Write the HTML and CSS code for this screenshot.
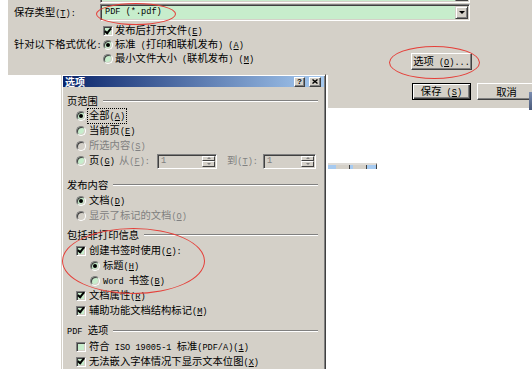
FILE: index.html
```html
<!DOCTYPE html>
<html>
<head>
  <meta charset="utf-8">
  <title>选项</title>
  <link rel="stylesheet" href="styles.css">
</head>
<body>

<div class="save-dlg">
  <div class="line frag">
    <span class="lbl"></span>
    <div class="combo"><span class="combo-val"></span><span class="drop"></span></div>
  </div>
  <div class="line l1">
    <span class="lbl">保存类型<span class="lt">(<u>T</u>):</span></span>
    <div class="combo"><span class="combo-val lt">PDF (*.pdf)</span><span class="drop"></span></div>
  </div>
  <div class="line l2">
    <span class="lbl"></span>
    <div class="ctl"><span class="cb on"></span><span>发布后打开文件<span class="lt">(<u>E</u>)</span></span></div>
  </div>
  <div class="line">
    <span class="lbl">针对以下格式优化<span class="lt">:</span></span>
    <div class="ctl"><span class="rd on"></span><span>标准<span class="lt"> (</span>打印和联机发布<span class="lt">) (<u>A</u>)</span></span></div>
  </div>
  <div class="line l4">
    <span class="lbl"></span>
    <div class="ctl">
      <span class="opt"><span class="rd"></span><span>最小文件大小<span class="lt"> (</span>联机发布<span class="lt">) (<u>M</u>)</span></span></span>
      <button class="btn opt-btn">选项<span class="lt"> (<u>O</u>)...</span></button>
    </div>
  </div>
  <div class="btn-row">
    <button class="btn def">保存<span class="lt"> (<u>S</u>)</span></button>
    <button class="btn">取消</button>
  </div>
</div>

<div class="opt-dlg">
  <div class="title">
    <span class="cap">选项</span>
    <span class="tb">?</span>
    <span class="tb tb-x"><svg width="6" height="5" viewBox="0 0 6 5"><path d="M0.5 0.5L5.5 4.5M5.5 0.5L0.5 4.5" stroke="#000" stroke-width="1.4"/></svg></span>
  </div>
  <div class="body">
    <div class="grp">
      <div class="head"><span>页范围</span></div>
      <div class="row first"><span class="rd on"></span><span class="focus">全部<span class="lt">(<u>A</u>)</span></span></div>
      <div class="row"><span class="rd"></span><span>当前页<span class="lt">(<u>E</u>)</span></span></div>
      <div class="row dis"><span class="rd"></span><span>所选内容<span class="lt">(<u>S</u>)</span></span></div>
      <div class="row pages">
        <span class="rd"></span>
        <span class="pg">页<span class="lt">(<u>G</u>)</span></span>
        <span class="dis from">从<span class="lt">(<u>F</u>):</span></span>
        <span class="spin w1"><span class="val lt">1</span><span class="arrows"><i></i><i></i></span></span>
        <span class="dis to">到<span class="lt">(<u>T</u>):</span></span>
        <span class="spin w2"><span class="val lt">1</span><span class="arrows"><i></i><i></i></span></span>
      </div>
    </div>

    <div class="grp g2">
      <div class="head"><span>发布内容</span></div>
      <div class="row"><span class="rd on"></span><span>文档<span class="lt">(<u>D</u>)</span></span></div>
      <div class="row dis"><span class="rd"></span><span>显示了标记的文档<span class="lt">(<u>O</u>)</span></span></div>
    </div>

    <div class="grp g3">
      <div class="head"><span>包括非打印信息</span></div>
      <div class="row"><span class="cb on"></span><span>创建书签时使用<span class="lt">(<u>C</u>):</span></span></div>
      <div class="row sub"><span class="rd on"></span><span>标题<span class="lt">(<u>H</u>)</span></span></div>
      <div class="row sub"><span class="rd"></span><span><span class="lt">Word </span>书签<span class="lt">(<u>B</u>)</span></span></div>
      <div class="row"><span class="cb on"></span><span>文档属性<span class="lt">(<u>R</u>)</span></span></div>
      <div class="row"><span class="cb on"></span><span>辅助功能文档结构标记<span class="lt">(<u>M</u>)</span></span></div>
    </div>

    <div class="grp g4">
      <div class="head"><span><span class="lt">PDF </span>选项</span></div>
      <div class="row"><span class="cb"></span><span>符合<span class="lt"> ISO 19005-1 </span>标准<span class="lt">(PDF/A)(<u>1</u>)</span></span></div>
      <div class="row"><span class="cb on"></span><span>无法嵌入字体情况下显示文本位图<span class="lt">(<u>X</u>)</span></span></div>
    </div>
  </div>
</div>

<div class="peek"><i></i><i></i></div>
<div class="edge"></div>

<div class="mark m-pdf"></div>
<div class="mark m-opt"></div>
<div class="mark m-bm"></div>

</body>
</html>
```

FILE: styles.css
```css
body {
  margin: 0;
  width: 532px;
  height: 369px;
  overflow: hidden;
  position: relative;
  background: #fff;
  font-family: "Noto Sans CJK SC", sans-serif;
  font-size: 10.3px;
  color: #000;
}

u { text-underline-offset: 1px; }

.lt {
  font-family: "Liberation Mono", monospace;
  font-size: 8.6px;
}

/* save dialog behind */
.save-dlg {
  position: absolute;
  left: 8px;
  top: 0;
  width: 524px;
  height: 108px;
  background: #d4d0c8;
  clip-path: polygon(0 0, 100% 0, 100% 100%, 320px 100%, 320px 75px, 0 75px);
}

.line {
  display: flex;
  align-items: center;
  height: 14px;
  line-height: 14px;
  padding-left: 6px;
  white-space: nowrap;
}
.line .lbl { width: 86px; flex: none; }
.line .ctl {
  width: 369px;
  display: flex;
  align-items: center;
  padding-left: 3px;
}
.frag { height: 17px; margin-top: -14px; }
.l1 { height: 17px; margin-top: 1px; }
.l2 { margin-top: 3px; }
.l4 { height: 18px; align-items: flex-start; }
.l4 .ctl { align-items: flex-start; }
.opt { display: flex; align-items: center; height: 14px; }

.combo {
  width: 370px;
  height: 17px;
  box-sizing: border-box;
  border: 1px solid;
  border-color: #808080 #fff #fff #808080;
  box-shadow: inset 1px 1px #404040, inset -1px -1px #d4d0c8;
  background: #c7edcc;
  padding: 1px;
  display: flex;
  align-items: center;
}
.combo-val { flex: 1; padding-left: 3px; line-height: 13px; }
.drop {
  width: 13px;
  height: 13px;
  box-sizing: border-box;
  background: #d4d0c8;
  border: 1px solid;
  border-color: #d4d0c8 #404040 #404040 #d4d0c8;
  box-shadow: inset 1px 1px #fff, inset -1px -1px #808080;
  display: flex;
  align-items: center;
  justify-content: center;
}
.drop::after {
  content: "";
  border-left: 3px solid transparent;
  border-right: 3px solid transparent;
  border-top: 3px solid #000;
}

.btn {
  font: inherit;
  color: #000;
  height: 17px;
  box-sizing: border-box;
  padding: 0;
  line-height: 13px;
  background: #d4d0c8;
  border: 1px solid;
  border-color: #fff #404040 #404040 #fff;
  box-shadow: inset -1px -1px #808080;
}
.btn.def {
  border-color: #000;
  box-shadow: inset 1px 1px #fff, inset -1px -1px #404040, inset -2px -2px #808080;
}
.opt-btn { width: 61px; margin: 1px 0 0 auto; }
.btn-row {
  display: flex;
  justify-content: flex-end;
  gap: 6px;
  margin: 13px -4px 0 0;
}
.btn-row .btn { width: 59px; }

/* check boxes and radios */
.cb, .rd {
  flex: none;
  width: 10px;
  height: 10px;
  box-sizing: border-box;
  border: 1px solid;
  border-color: #808080 #fff #fff #808080;
  box-shadow: inset 1px 1px #404040, inset -1px -1px #d4d0c8;
  background: #c7edcc;
  margin-right: 3px;
  display: flex;
  align-items: center;
  justify-content: center;
}
.rd { border-radius: 50%; }
.rd.on::after {
  content: "";
  width: 4px;
  height: 4px;
  border-radius: 50%;
  background: #000;
}
.cb.on::after {
  content: "";
  width: 2px;
  height: 5px;
  border: solid #000;
  border-width: 0 2px 2px 0;
  transform: translate(0, -1px) rotate(40deg);
}
.line .cb, .line .rd { margin-right: 2px; }

/* options dialog */
.opt-dlg {
  position: absolute;
  left: 61px;
  top: 74px;
  width: 265px;
  height: 300px;
  box-sizing: border-box;
  background: #d4d0c8;
  border: 1px solid;
  border-color: #d4d0c8 #404040 #404040 #d4d0c8;
  box-shadow: inset 1px 1px #fff, inset -1px -1px #808080;
  padding: 1px;
}
.title {
  height: 11px;
  display: flex;
  align-items: center;
  gap: 4px;
  padding: 0 3px 0 2px;
  background: linear-gradient(90deg, #0a246a, #a6caf0);
}
.cap {
  flex: 1;
  color: #fff;
  font-weight: bold;
  font-size: 10px;
  line-height: 11px;
}
.tb {
  width: 11px;
  height: 10px;
  box-sizing: border-box;
  background: #d4d0c8;
  border: 1px solid;
  border-color: #fff #404040 #404040 #fff;
  box-shadow: inset -1px -1px #808080;
  display: flex;
  align-items: center;
  justify-content: center;
  font: bold 8px/8px "Liberation Sans", sans-serif;
}
.tb-x { width: 12px; }
.tb svg { display: block; }

.body { padding: 7px 6px 0 4px; }
.head {
  display: flex;
  align-items: center;
  height: 16px;
  line-height: 16px;
  white-space: nowrap;
}
.head::after {
  content: "";
  flex: 1;
  border-top: 1px solid #808080;
  border-bottom: 1px solid #fff;
  margin-left: 5px;
}
.grp:first-child .head { height: 13px; line-height: 13px; }
.g2 { margin-top: 8px; }
.g3 { margin-top: 4px; }
.g4 { margin-top: 5px; }

.row {
  display: flex;
  align-items: center;
  height: 15px;
  line-height: 15px;
  padding-left: 9px;
  white-space: nowrap;
}
.row.first { margin-top: 1px; }
.row.sub { padding-left: 23px; }
.dis { color: #808080; }
.dis .rd { background: #d4d0c8; }
.focus {
  border: 1px dotted #000;
  padding: 0 1px;
  line-height: 11px;
  margin-left: -2px;
}

.pages { height: 16px; }
.pg { width: 30px; }
.from { width: 38px; }
.to { width: 36px; margin-left: 10px; }
.spin {
  height: 15px;
  box-sizing: border-box;
  display: flex;
  border: 1px solid;
  border-color: #808080 #fff #fff #808080;
  box-shadow: inset 1px 1px #404040, inset -1px -1px #d4d0c8;
  padding: 1px;
  background: #d4d0c8;
  color: #808080;
}
.spin.w1 { width: 60px; }
.spin.w2 { width: 53px; }
.spin .val { flex: 1; padding-left: 2px; line-height: 11px; }
.arrows { width: 13px; display: flex; flex-direction: column; }
.arrows i {
  flex: 1;
  background: #d4d0c8;
  border: 1px solid;
  border-color: #fff #404040 #404040 #fff;
  display: flex;
  align-items: center;
  justify-content: center;
}
.arrows i::after {
  content: "";
  border-left: 2px solid transparent;
  border-right: 2px solid transparent;
  border-bottom: 2px solid #808080;
}
.arrows i + i::after { border-bottom: 0; border-top: 2px solid #808080; }

/* bits of other windows */
.peek {
  position: absolute;
  left: 328px;
  top: 163px;
  width: 40px;
  height: 4px;
  border-top: 2px solid #dedbd6;
  border-right: 1px solid #404040;
  background: #a6caf0;
  display: flex;
  gap: 3px;
  padding-left: 8px;
}
.peek i { width: 13px; height: 4px; background: #d4d0c8; border-right: 1px solid #404040; }
.edge {
  position: absolute;
  left: 529px;
  top: 92px;
  width: 3px;
  height: 18px;
  background: linear-gradient(#7b8db0, #4b5b7b);
}

/* red hand-drawn marks */
.mark {
  position: absolute;
  border: 1px solid #e5403a;
  border-radius: 50%;
}
.m-pdf { left: 96px; top: 3px; width: 78px; height: 20px; }
.m-opt { left: 389px; top: 46px; width: 89px; height: 31px; }
.m-bm { left: 62px; top: 228px; width: 141px; height: 64px; }
```
